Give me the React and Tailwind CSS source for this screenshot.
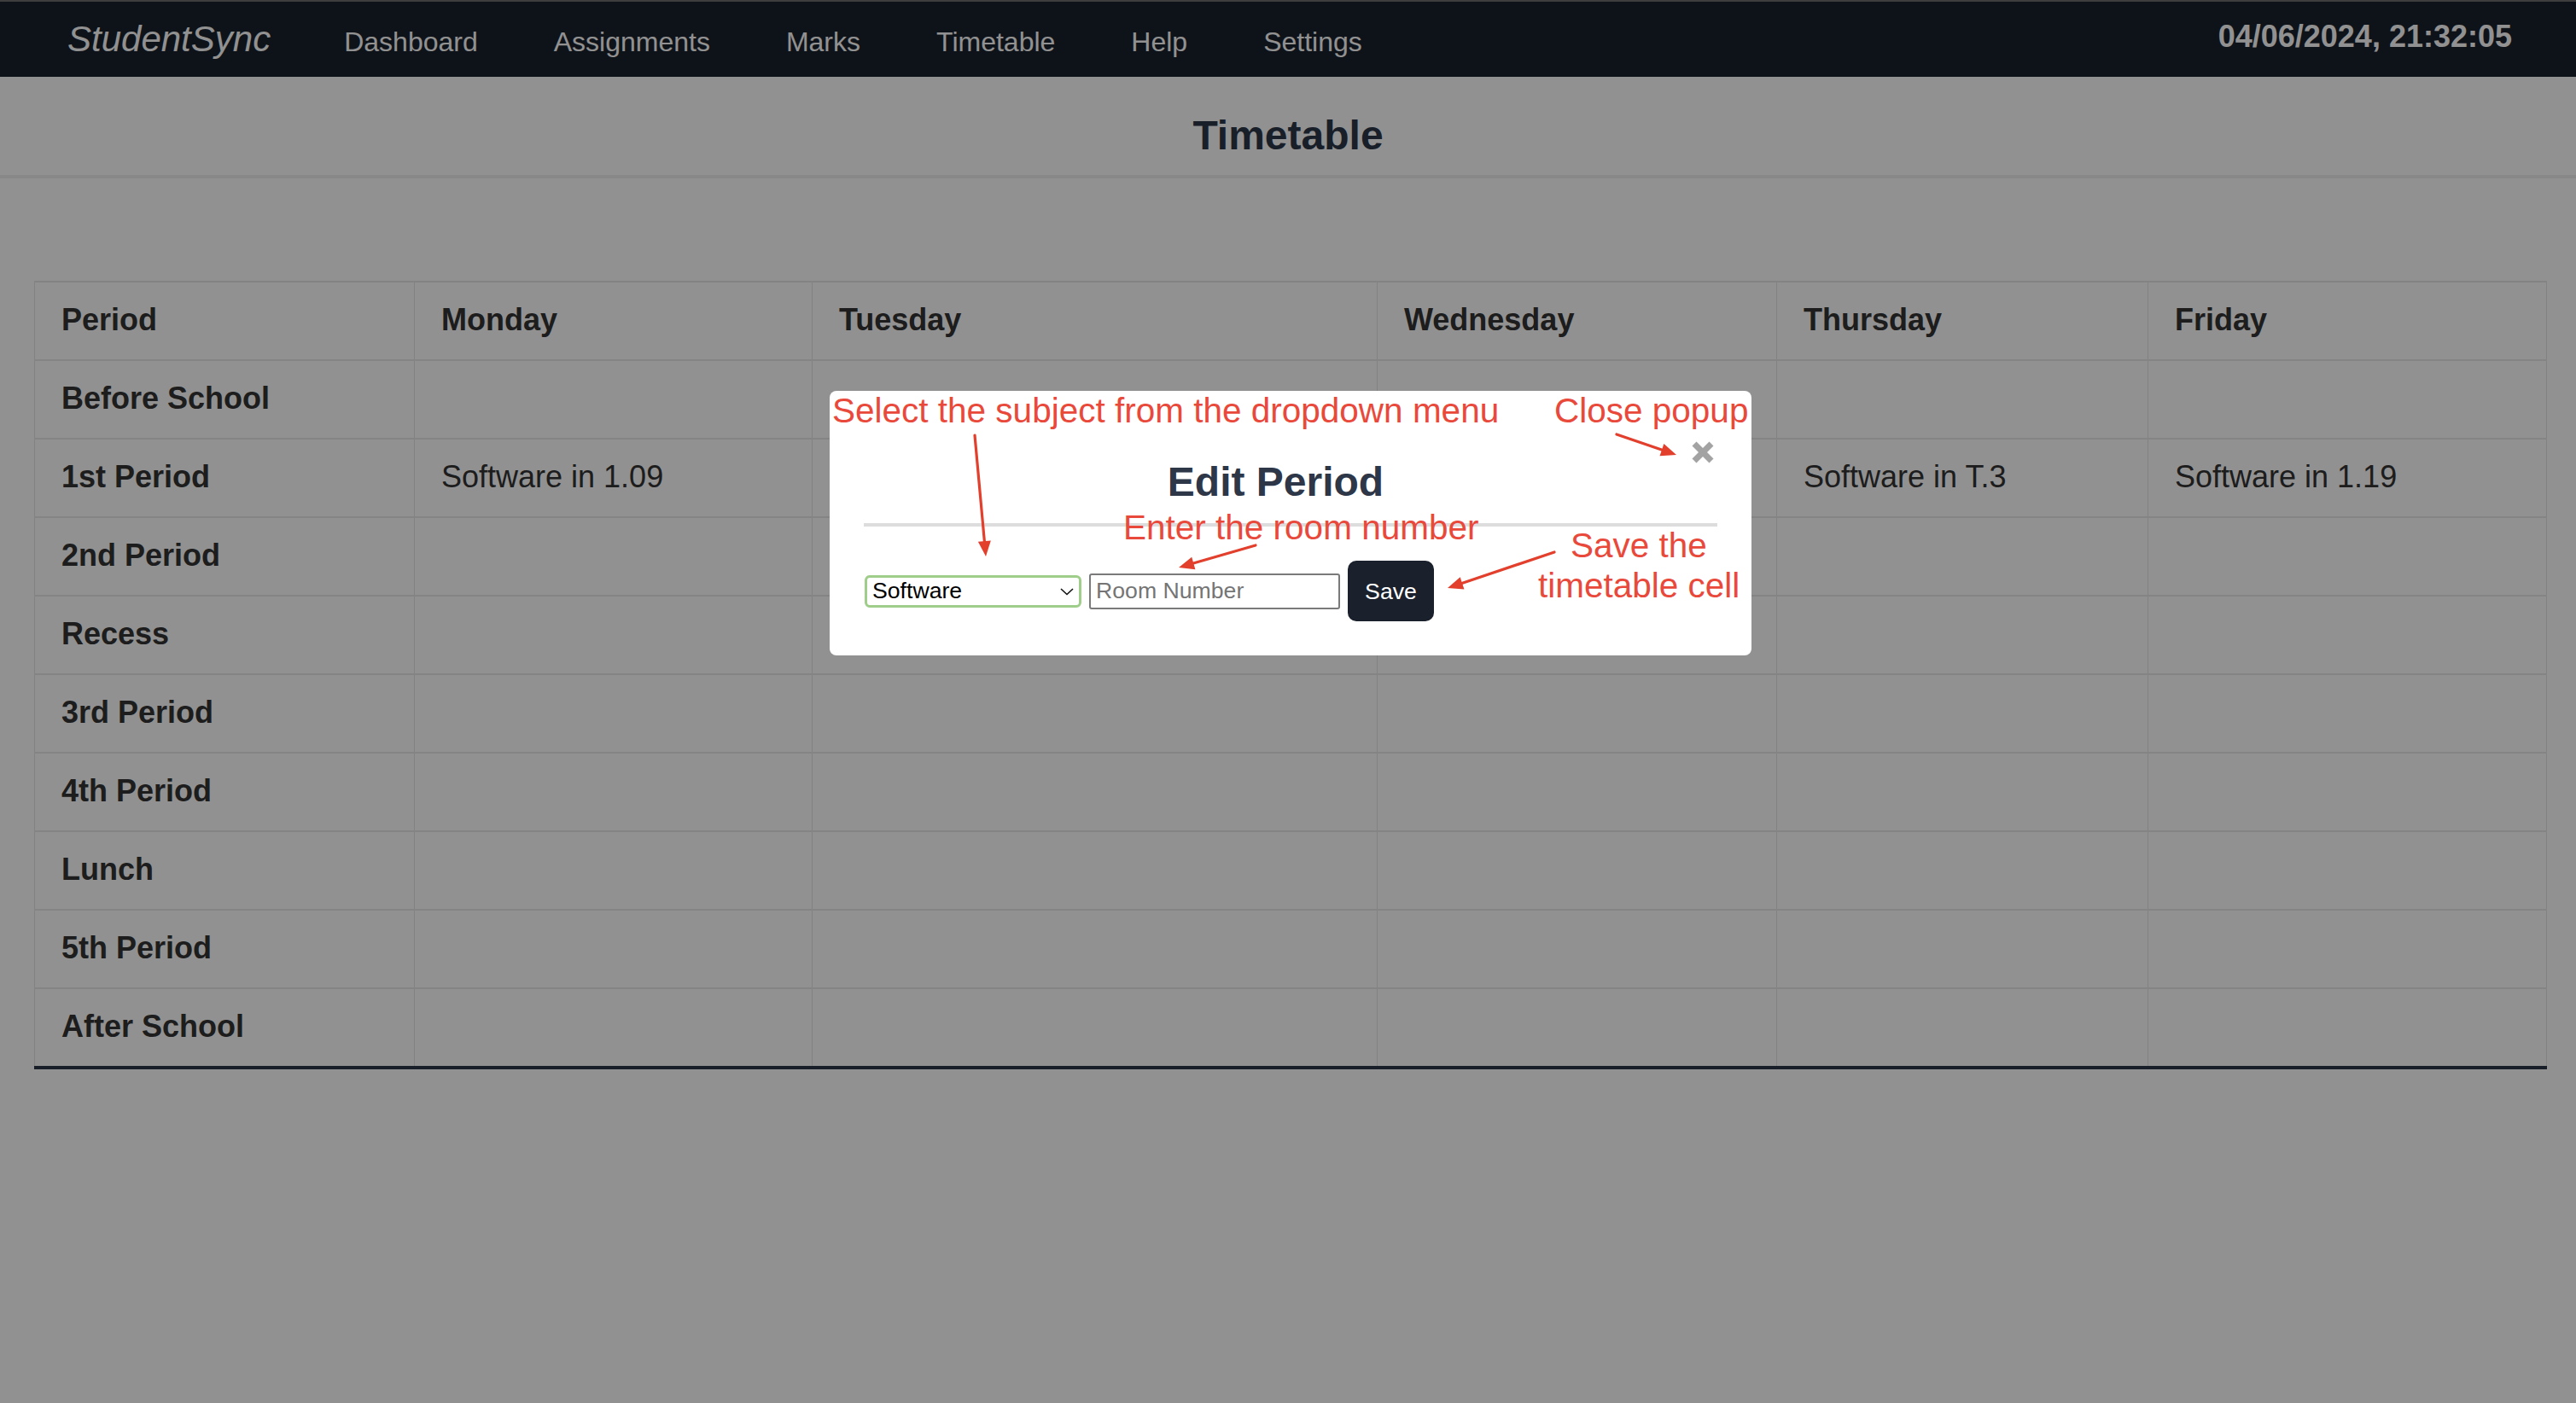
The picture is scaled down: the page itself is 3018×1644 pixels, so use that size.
import React from "react";

const periods = [
  ["Before School", ["", "", "", "", ""]],
  ["1st Period", ["Software in 1.09", "Software in T.3", "Software in 1.09", "Software in T.3", "Software in 1.19"]],
  ["2nd Period", ["", "", "", "", ""]],
  ["Recess", ["", "", "", "", ""]],
  ["3rd Period", ["", "", "", "", ""]],
  ["4th Period", ["", "", "", "", ""]],
  ["Lunch", ["", "", "", "", ""]],
  ["5th Period", ["", "", "", "", ""]],
  ["After School", ["", "", "", "", ""]],
];

const days = ["Monday", "Tuesday", "Wednesday", "Thursday", "Friday"];

function Arrow({ x1, y1, x2, y2, head = 18, w = 15 }) {
  const dx = x2 - x1;
  const dy = y2 - y1;
  const len = Math.hypot(dx, dy);
  const ux = dx / len;
  const uy = dy / len;
  const bx = x2 - ux * head;
  const by = y2 - uy * head;
  const px = (-uy * w) / 2;
  const py = (ux * w) / 2;
  return (
    <g>
      <line x1={x1} y1={y1} x2={bx + ux * 2} y2={by + uy * 2} stroke="#e23f2d" strokeWidth="3.2" strokeLinecap="round" />
      <polygon points={`${x2},${y2} ${bx + px},${by + py} ${bx - px},${by - py}`} fill="#e23f2d" />
    </g>
  );
}

function Cell({ children, bold, first }) {
  return (
    <div
      className={`flex items-center pl-[31px] pb-[2px] border-r border-[#e4e4e4] ${first ? "border-l" : ""} ${
        bold ? "font-bold" : "font-normal"
      } text-[36px] leading-none text-[#333]`}
    >
      {children}
    </div>
  );
}

export default function App() {
  return (
    <div className="relative h-screen w-full overflow-hidden bg-white font-['Liberation_Sans',Arial,Helvetica,sans-serif]">
      {/* Page content */}
      <div className="h-[2px] bg-[#6e6e6e]" />
      <nav className="flex h-[88px] items-center justify-between bg-[#1a202c] pl-[79px] pr-[75px] text-white">
        <div className="flex items-baseline">
          <span className="text-[42px] italic leading-none">StudentSync</span>
          <div className="ml-[86px] flex items-baseline gap-[89px] text-[32px] leading-none">
            <span>Dashboard</span>
            <span>Assignments</span>
            <span>Marks</span>
            <span>Timetable</span>
            <span>Help</span>
            <span>Settings</span>
          </div>
        </div>
        <span className="mb-[7px] text-[36px] font-bold leading-none">04/06/2024, 21:32:05</span>
      </nav>

      <header className="border-b-4 border-[#f0f0f0] pt-[45px] pb-[22px] text-center">
        <h1 className="text-[48px] font-bold leading-none text-[#2d3748]">Timetable</h1>
      </header>

      <div className="ml-[40px] mt-[120px] w-[2944px] border-t-2 border-[#e6e6e6]">
        <div className="grid h-[92px] grid-cols-[446px_466px_662px_468px_435px_467px] border-b-2 border-[#e8e8e8]">
          <Cell bold first>Period</Cell>
          {days.map((d) => (
            <Cell bold key={d}>{d}</Cell>
          ))}
        </div>
        {periods.map(([name, cells], i) => {
          const last = i === periods.length - 1;
          return (
            <div
              key={name}
              className={`grid grid-cols-[446px_466px_662px_468px_435px_467px] ${
                last ? "h-[94px] border-b-4 border-[#2d3748]" : "h-[92px] border-b-2 border-[#e8e8e8]"
              }`}
            >
              <Cell bold first>{name}</Cell>
              {cells.map((c, j) => (
                <Cell key={j}>{c}</Cell>
              ))}
            </div>
          );
        })}
      </div>

      {/* Backdrop */}
      <div className="absolute inset-0 bg-black/[0.43]" />

      {/* Modal */}
      <div className="absolute left-[972px] top-[458px] h-[310px] w-[1080px] rounded-[8px] bg-white p-[40px]">
        <button className="absolute right-[44px] top-[59px] h-[26px] w-[26px]" aria-label="Close">
          <svg width="26" height="26" viewBox="0 0 26 26">
            <line x1="3" y1="3" x2="23" y2="23" stroke="#a3a3a3" strokeWidth="7" />
            <line x1="23" y1="3" x2="3" y2="23" stroke="#a3a3a3" strokeWidth="7" />
          </svg>
        </button>
        <h2 className="mt-[43px] pr-[35px] text-center text-[48px] font-bold leading-none text-[#2d3748]">Edit Period</h2>
        <div className="mt-[24px] h-[4px] w-full bg-[#dddddd]" />
        <div className="mt-[40px] flex items-center gap-[9px]">
          <div className="relative ml-[1px] h-[38px] w-[254px]">
            <select
              defaultValue="Software"
              className="h-full w-full appearance-none rounded-[6px] border-[3px] border-[#9fcd8a] bg-white pl-[6px] text-[26.67px] leading-none text-black outline-none"
            >
              <option>Software</option>
            </select>
            <svg className="pointer-events-none absolute right-[9px] top-[15px]" width="16" height="9" viewBox="0 0 16 9">
              <polyline points="1,1 8,7.5 15,1" fill="none" stroke="#111" strokeWidth="1.6" />
            </svg>
          </div>
          <input
            placeholder="Room Number"
            className="h-[42px] w-[294px] rounded-[3px] border-2 border-[#7a7a7a] pl-[6px] text-[26.67px] text-black outline-none placeholder:text-[#757575]"
          />
          <button className="h-[71px] w-[101px] rounded-[10px] bg-[#1a202c] text-[26.67px] text-white">Save</button>
        </div>
      </div>

      {/* Annotations */}
      <svg className="pointer-events-none absolute inset-0" width="3018" height="1644">
        <Arrow x1={1142} y1={510} x2={1155} y2={652} />
        <Arrow x1={1894} y1={509} x2={1964} y2={533} />
        <Arrow x1={1471} y1={639} x2={1381} y2={665} />
        <Arrow x1={1821} y1={647} x2={1696} y2={689} />
      </svg>
      <span className="pointer-events-none absolute left-[975px] top-[461px] whitespace-nowrap text-[40.5px] leading-none text-[#e9493b]">
        Select the subject from the dropdown menu
      </span>
      <span className="pointer-events-none absolute left-[1821px] top-[461px] whitespace-nowrap text-[40.5px] leading-none text-[#e9493b]">
        Close popup
      </span>
      <span className="pointer-events-none absolute left-[1316px] top-[598px] whitespace-nowrap text-[40.5px] leading-none text-[#e9493b]">
        Enter the room number
      </span>
      <span className="pointer-events-none absolute left-[1840px] top-[619px] whitespace-nowrap text-[40.5px] leading-none text-[#e9493b]">
        Save the
      </span>
      <span className="pointer-events-none absolute left-[1802px] top-[666px] whitespace-nowrap text-[40.5px] leading-none text-[#e9493b]">
        timetable cell
      </span>
    </div>
  );
}
